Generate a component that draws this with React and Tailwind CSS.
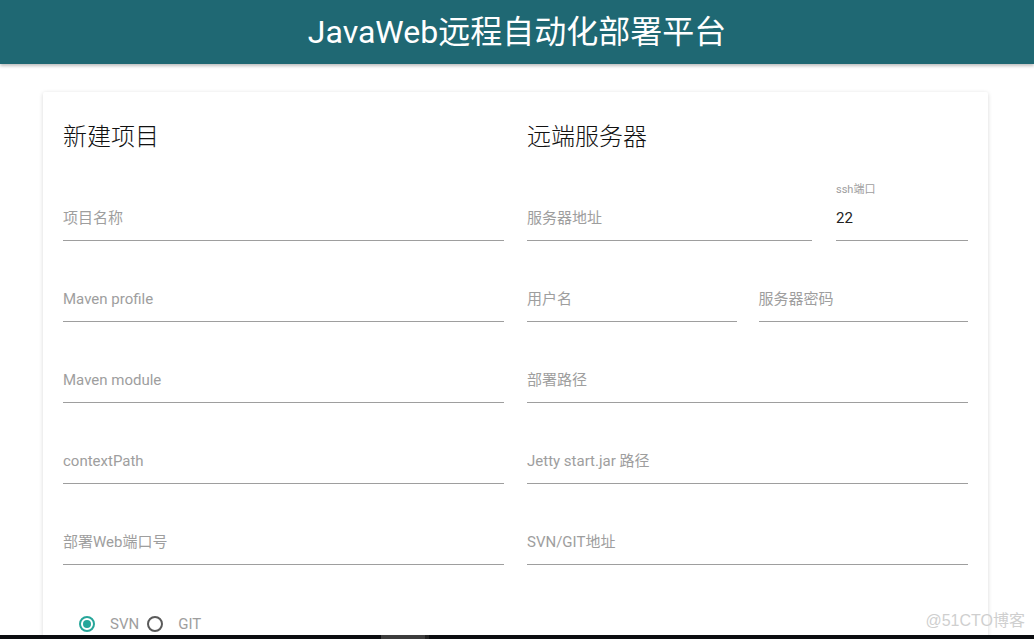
import React from "react";

const font = { fontFamily: 'Roboto, "Noto Sans CJK SC", sans-serif' };

function Field({ label, className = "" }) {
  return (
    <div className={`h-[81px] flex items-end pb-[11px] border-b border-[#9e9e9e] ${className}`}>
      <span className="text-[15px] leading-[22px] text-[#9e9e9e]">{label}</span>
    </div>
  );
}

function Radio({ checked, label }) {
  return (
    <div className="flex items-center">
      {checked ? (
        <span className="w-[16px] h-[16px] rounded-full border-2 border-[#26a69a] flex items-center justify-center">
          <span className="w-[8px] h-[8px] rounded-full bg-[#26a69a]" />
        </span>
      ) : (
        <span className="w-[16px] h-[16px] rounded-full border-2 border-[#5a5a5a]" />
      )}
      <span className="ml-[15px] text-[15px] leading-[20px] text-[#9e9e9e]">{label}</span>
    </div>
  );
}

export default function App() {
  return (
    <div className="relative w-[1034px] h-[639px] bg-white flex flex-col overflow-hidden" style={font}>
      <header className="h-[64px] shrink-0 bg-[#1f6873] flex items-center justify-center shadow-[0_2px_3px_rgba(0,0,0,0.25)] relative z-10">
        <h1 className="text-white text-[32px] leading-none font-normal">JavaWeb远程自动化部署平台</h1>
      </header>
      <main className="flex-1 overflow-hidden pt-[28px] pl-[43px]">
        <div className="w-[945px] bg-white shadow-[0_1px_4px_rgba(0,0,0,0.16)] rounded-[2px] px-[20px] pt-[29px] pb-[40px]">
          <div className="grid grid-cols-2 gap-x-[23px]">
            <div>
              <h2 className="text-[24px] leading-[32px] font-light text-[#111]">新建项目</h2>
              <div className="mt-[7px]">
                <Field label="项目名称" />
                <Field label="Maven profile" />
                <Field label="Maven module" />
                <Field label="contextPath" />
                <Field label="部署Web端口号" />
              </div>
            </div>
            <div>
              <h2 className="text-[24px] leading-[32px] font-light text-[#111]">远端服务器</h2>
              <div className="mt-[7px]">
                <div className="flex gap-[24px]">
                  <Field label="服务器地址" className="flex-1" />
                  <div className="w-[132px] h-[81px] flex flex-col justify-end pb-[11px] border-b border-[#9e9e9e]">
                    <span className="text-[11px] leading-[14px] text-[#9e9e9e] mb-[10px]">ssh端口</span>
                    <span className="text-[15px] leading-[22px] text-[#222]">22</span>
                  </div>
                </div>
                <div className="flex gap-[22px]">
                  <Field label="用户名" className="flex-1" />
                  <Field label="服务器密码" className="flex-1" />
                </div>
                <Field label="部署路径" />
                <Field label="Jetty start.jar 路径" />
                <Field label="SVN/GIT地址" />
              </div>
            </div>
          </div>
          <div className="mt-[49px] pl-[16px] flex items-center gap-[8px]">
            <Radio checked label="SVN" />
            <Radio label="GIT" />
          </div>
        </div>
      </main>
      <div className="h-[4px] shrink-0 bg-[#0b0d10] flex">
        <div className="ml-[381px] w-[44px] bg-[#3c3c3c]" />
        <div className="w-[4px] bg-[#222]" />
      </div>
      <div className="absolute right-[9px] bottom-[8px] text-[16px] leading-[20px] text-[#cfcfcf]" style={{ fontFamily: '"Liberation Sans", "Noto Sans CJK SC", sans-serif' }}>
        @51CTO博客
      </div>
    </div>
  );
}
